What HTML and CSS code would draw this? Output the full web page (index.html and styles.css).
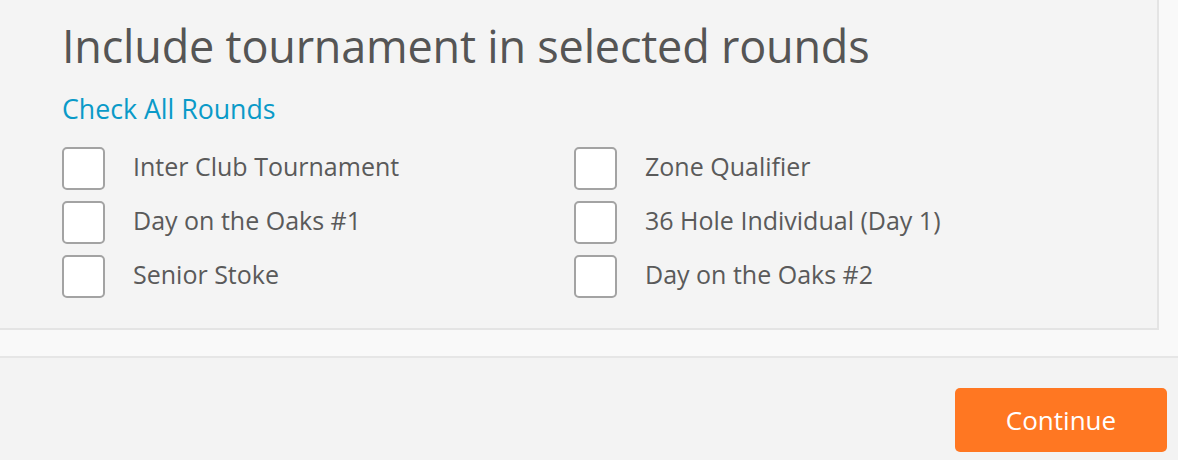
FILE: index.html
```html
<!DOCTYPE html>
<html lang="en">
<head>
    <meta charset="UTF-8">
    <title>Rounds</title>
    <link rel="stylesheet" href="styles.css">
</head>
<body>
    <div class="panel">
        <h1 class="title">Include tournament in selected rounds</h1>
        <a class="check-all" href="#">Check All Rounds</a>
        <div class="rounds">
            <div class="col">
                <label class="round"><span class="box"></span><span class="name">Inter Club Tournament</span></label>
                <label class="round"><span class="box"></span><span class="name">Day on the Oaks #1</span></label>
                <label class="round"><span class="box"></span><span class="name">Senior Stoke</span></label>
            </div>
            <div class="col">
                <label class="round"><span class="box"></span><span class="name">Zone Qualifier</span></label>
                <label class="round"><span class="box"></span><span class="name">36 Hole Individual (Day 1)</span></label>
                <label class="round"><span class="box"></span><span class="name">Day on the Oaks #2</span></label>
            </div>
        </div>
    </div>
    <div class="spacer"></div>
    <div class="footer">
        <button type="button" class="continue">Continue</button>
    </div>
</body>
</html>
```
FILE: styles.css
```css
*{
    margin:0;
    padding:0;
    box-sizing:border-box;
}
body{
    background:#f9f9f9;
    font-family:"Open Sans", "Lato", sans-serif;
    color:#555;
}
.panel{
    width:1159px;
    height:330px;
    background:#f4f4f4;
    border-right:2px solid #e4e4e4;
    border-bottom:2px solid #e4e4e4;
    padding:19px 0 0 62px;
}
.title{
    font-size:45px;
    font-weight:400;
    line-height:54px;
    letter-spacing:-0.2px;
    color:#555;
}
.check-all{
    display:block;
    width:max-content;
    margin-top:21px;
    font-size:26.7px;
    line-height:30px;
    color:#0a9ac8;
    text-decoration:none;
}
.rounds{
    display:flex;
    margin-top:23px;
}
.col{
    width:512px;
    display:flex;
    flex-direction:column;
    gap:12px;
}
.round{
    display:flex;
    align-items:center;
    height:42px;
}
.box{
    width:43px;
    height:43px;
    background:#fff;
    border:2px solid #a3a3a3;
    border-radius:5px;
    margin-right:28px;
}
.name{
    font-size:25px;
    color:#5a5a5a;
    padding-bottom:4px;
}
.spacer{
    height:26px;
}
.footer{
    height:104px;
    background:#f3f3f3;
    border-top:2px solid #e6e6e6;
    display:flex;
    justify-content:flex-end;
    padding:30px 11px 0 0;
}
.continue{
    width:212px;
    height:64px;
    background:#ff7722;
    border:none;
    border-radius:5px;
    color:#fff;
    font-family:"Open Sans", "Lato", sans-serif;
    font-size:26px;
}
```
